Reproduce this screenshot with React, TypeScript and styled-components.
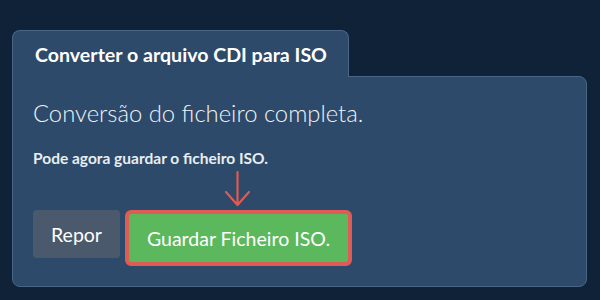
import React from "react"
import styled, { createGlobalStyle } from "styled-components"

const GlobalStyle = createGlobalStyle`
  html, body {
    margin: 0;
    padding: 0;
    background-color: #0f2238;
    font-family: Lato, "Open Sans", sans-serif;
  }
`

const Page = styled.div`
  width: 600px;
  height: 300px;
  box-sizing: border-box;
  padding: 30px 13px 0 12px;
`

const Tab = styled.div`
  display: inline-block;
  position: relative;
  z-index: 1;
  height: 47px;
  box-sizing: border-box;
  padding: 12px 21px 0 22px;
  background-color: #2d4a6a;
  border: 1px solid #4a6686;
  border-bottom: none;
  border-radius: 8px 8px 0 0;
  color: #ffffff;
  font-size: 19.6px;
  font-weight: 700;
  line-height: 24px;
  margin-bottom: -1px;
`

const Panel = styled.div`
  height: 211px;
  box-sizing: border-box;
  background-color: #2d4a6a;
  border: 1px solid #4a6686;
  border-radius: 0 8px 8px 8px;
  padding: 21px 20px 0 20px;
  color: #ffffff;
`

const Heading = styled.h2`
  margin: 0;
  font-size: 23.8px;
  font-weight: 300;
  line-height: 30px;
  color: #f0f3f6;
`

const Note = styled.p`
  margin: 20px 0 0 0;
  font-size: 15.5px;
  font-weight: 700;
  line-height: 20px;
  color: #e8edf2;
`

const ArrowWrap = styled.div`
  height: 42px;
  padding-left: 190px;
`

const Actions = styled.div`
  display: flex;
  align-items: flex-start;
  gap: 5px;
`

const Button = styled.button<{ $variant: "reset" | "save" }>`
  font-family: Lato, "Open Sans", sans-serif;
  font-size: 19.5px;
  font-weight: 400;
  color: #ffffff;
  cursor: pointer;
  height: ${(p) => (p.$variant === "save" ? "56px" : "48px")};
  padding: 0 18px;
  border-radius: ${(p) => (p.$variant === "save" ? "6px" : "4px")};
  background-color: ${(p) => (p.$variant === "save" ? "#5cb85c" : "#4a5a6c")};
  border: ${(p) => (p.$variant === "save" ? "4px solid #df5b55" : "none")};
  box-sizing: border-box;
`

function Arrow() {
  return (
    <svg width="30" height="42" viewBox="0 0 30 42">
      <path
        d="M14.5 4 V37 M3 24 L14.5 37 L26 24"
        fill="none"
        stroke="#df5b55"
        strokeWidth="2.2"
        strokeLinecap="round"
        strokeLinejoin="round"
      />
    </svg>
  )
}

export default function App() {
  return (
    <>
      <GlobalStyle />
      <Page>
        <Tab>Converter o arquivo CDI para ISO</Tab>
        <Panel>
          <Heading>Conversão do ficheiro completa.</Heading>
          <Note>Pode agora guardar o ficheiro ISO.</Note>
          <ArrowWrap>
            <Arrow />
          </ArrowWrap>
          <Actions>
            <Button $variant="reset">Repor</Button>
            <Button $variant="save">Guardar Ficheiro ISO.</Button>
          </Actions>
        </Panel>
      </Page>
    </>
  )
}
